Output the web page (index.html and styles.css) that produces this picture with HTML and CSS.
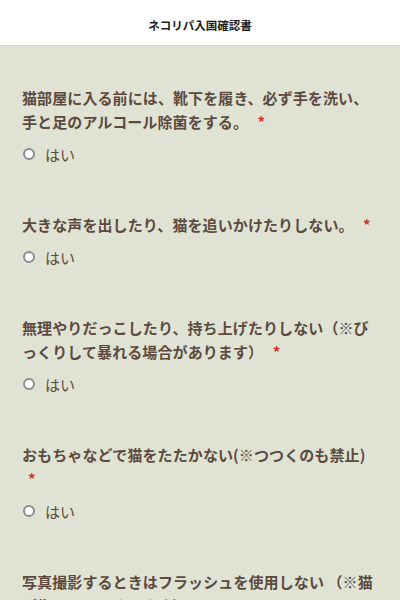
FILE: index.html
```html
<!DOCTYPE html>
<html lang="ja">
<head>
<meta charset="utf-8">
<title>ネコリパ入国確認書</title>
<link rel="stylesheet" href="styles.css">
</head>
<body>
<header class="top-bar">
  <h1 class="title">ネコリパ入国確認書</h1>
</header>
<main class="form">
  <section class="question">
    <p class="q-text">猫部屋に入る前には、靴下を履き、必ず手を洗い、手と足のアルコール除菌をする。 <span class="req">*</span></p>
    <label class="option"><span class="radio"></span><span class="opt-label">はい</span></label>
  </section>
  <section class="question">
    <p class="q-text">大きな声を出したり、猫を追いかけたりしない。 <span class="req">*</span></p>
    <label class="option"><span class="radio"></span><span class="opt-label">はい</span></label>
  </section>
  <section class="question">
    <p class="q-text">無理やりだっこしたり、持ち上げたりしない（※びっくりして暴れる場合があります） <span class="req">*</span></p>
    <label class="option"><span class="radio"></span><span class="opt-label">はい</span></label>
  </section>
  <section class="question">
    <p class="q-text">おもちゃなどで猫をたたかない(※つつくのも禁止) <span class="req">*</span></p>
    <label class="option"><span class="radio"></span><span class="opt-label">はい</span></label>
  </section>
  <section class="question">
    <p class="q-text">写真撮影するときはフラッシュを使用しない （※猫が失明してしまいます） <span class="req">*</span></p>
    <label class="option"><span class="radio"></span><span class="opt-label">はい</span></label>
  </section>
</main>
</body>
</html>
```

FILE: styles.css
```css
html, body {
  margin: 0;
  padding: 0;
}
body {
  background: #e0e3d4;
  font-family: "Noto Sans CJK JP", "Noto Sans", sans-serif;
  color: #5c4a3f;
}
.top-bar {
  background: #ffffff;
  height: 45px;
  box-sizing: border-box;
  padding-top: 6px;
  display: flex;
  align-items: center;
  justify-content: center;
  box-shadow: 0 1px 1px rgba(0,0,0,0.06);
}
.title {
  margin: 0;
  font-size: 11.5px;
  font-weight: 700;
  color: #1e1e1e;
  line-height: 1;
}
.form {
  padding: 41px 22px 0;
  display: flex;
  flex-direction: column;
  gap: 47px;
}
.question {
  display: flex;
  flex-direction: column;
  gap: 8px;
}
.q-text {
  margin: 0;
  font-size: 15px;
  font-weight: 700;
  line-height: 24px;
  letter-spacing: 0.1px;
}
.req {
  color: #d93025;
  padding-left: 6px;
  font-weight: 700;
}
.option {
  display: flex;
  align-items: center;
  height: 24px;
  padding-left: 1px;
}
.radio {
  width: 8px;
  height: 8px;
  border: 2px solid #8c8c8c;
  border-radius: 50%;
  background: #ffffff;
  margin-right: 10px;
}
.opt-label {
  font-size: 15px;
  font-weight: 400;
  color: #5c4a3f;
}
```
